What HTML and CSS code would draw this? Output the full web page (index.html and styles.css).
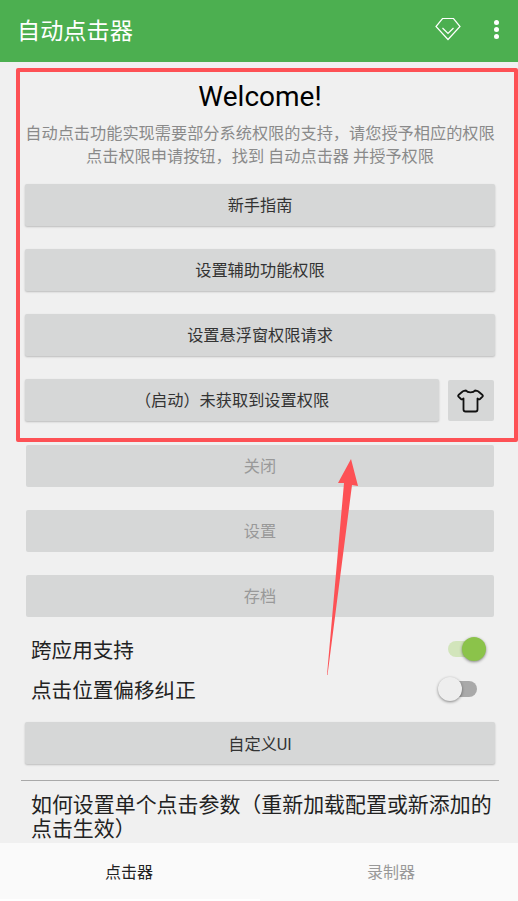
FILE: index.html
```html
<!DOCTYPE html>
<html lang="zh">
<head>
<meta charset="utf-8">
<title>自动点击器</title>
<link rel="stylesheet" href="styles.css">
</head>
<body>
<div class="app">
  <header class="bar">
    <h1 class="bar-title">自动点击器</h1>
    <svg class="gem" width="26" height="24" viewBox="0 0 26 24" fill="none" stroke="#fff" stroke-width="1.2"><path d="M7.5 1.5H18.5L25 9.5 13 22.5 1 9.5Z"/><path d="M7.5 11 13 16.500 18.500 11"/></svg>
    <div class="more"><i></i><i></i><i></i></div>
  </header>
  <main class="content">
    <h2 class="welcome">Welcome!</h2>
    <p class="intro">自动点击功能实现需要部分系统权限的支持，请您授予相应的权限<br>点击权限申请按钮，找到 自动点击器 并授予权限</p>
    <div class="btn raised">新手指南</div>
    <div class="btn raised">设置辅助功能权限</div>
    <div class="btn raised">设置悬浮窗权限请求</div>
    <div class="btn-row">
      <div class="btn raised grow">（启动）未获取到设置权限</div>
      <div class="shirt">
        <svg width="28" height="26" viewBox="0 0 28 26" fill="none" stroke="#111" stroke-width="1.8" stroke-linejoin="round"><path d="M9 2.500C10.500 5 16.500 5 18 2.500L20 2.800Q21 3 22 4L25.500 7Q26.200 7.800 25.500 8.600L23 11Q22 11.800 20.500 10.500V21.500Q20.500 23.500 18.500 23.500H8.500Q6.500 23.500 6.500 21.500V10.500Q5 11.800 4 11L1.500 8.600Q.8 7.800 1.500 7L5 4Q6 3 7 2.800Z"/></svg>
      </div>
    </div>
    <div class="btn off">关闭</div>
    <div class="btn off">设置</div>
    <div class="btn off">存档</div>
    <div class="opt first"><span>跨应用支持</span><span class="sw on"><b></b></span></div>
    <div class="opt"><span>点击位置偏移纠正</span><span class="sw"><b></b></span></div>
    <div class="btn raised custom">自定义UI</div>
    <hr class="rule">
    <p class="how">如何设置单个点击参数（重新加载配置或新添加的点击生效）</p>
  </main>
  <nav class="tabs">
    <div class="tab active">点击器</div>
    <div class="tab second">录制器</div>
  </nav>
  <div class="mark"></div>
  <svg class="arrow" width="40" height="222" viewBox="0 0 40 222"><path d="M25 0 32 27 26 26 1.500 216 1 216 18 24 12 24Z" fill="#fd5155"/></svg>
</div>
</body>
</html>
```
FILE: styles.css
```css
* { box-sizing: border-box; }
html, body { margin: 0; padding: 0; }
body {
  width: 518px; height: 901px; overflow: hidden;
  background: #f0f0f0;
  font-family: Roboto, "Noto Sans CJK SC", sans-serif;
  color: #222;
}
.app { position: relative; width: 518px; height: 901px; overflow: hidden; display: flex; flex-direction: column; }
.bar {
  height: 62px; flex: none; background: #4caf50; color: #fff;
  display: flex; align-items: center; padding: 0 18px 0 17px;
}
.bar-title { margin: 0; flex: 1; font-size: 23.2px; line-height: 62px; font-weight: 400; }
.gem { margin-right: 33.5px; margin-top: -4px; }
.more { display: flex; flex-direction: column; gap: 2px; margin-right: 1px; margin-top: -3px; }
.more i { width: 5px; height: 5px; border-radius: 50%; background: #fff; display: block; }
.content { flex: 1; overflow: hidden; padding: 0 23px 0 25px; }
.welcome { margin: 16px 0 0; text-align: center; font-size: 28px; line-height: 38px; font-weight: 400; color: #000; }
.intro { margin: 6px -4px 0; text-align: center; font-size: 16.2px; line-height: 23px; color: #8a8a8a; white-space: nowrap; }
.btn {
  height: 42px; background: #d6d7d7; border-radius: 2px; padding-bottom: 2px;
  display: flex; align-items: center; justify-content: center;
  font-size: 16.2px; color: #333;
}
.raised { box-shadow: 0 1px 2px rgba(0,0,0,.22); margin-bottom: 23px; }
.intro + .btn { margin-top: 16px; }
.btn-row { display: flex; gap: 9px; align-items: flex-start; margin-bottom: 24px; }
.btn-row .raised { margin: 0; }
.grow { flex: 1; }
.shirt { width: 46px; height: 41px; margin-top: 1px; background: #d6d7d7; border-radius: 2px; display: flex; align-items: center; justify-content: center; margin-right: 1px; }
.off { margin: 0 1px 23px; color: #999; }
.opt { display: flex; align-items: center; justify-content: space-between; height: 40px; padding: 0 18px 0 6px; font-size: 20.6px; color: #222; }
.opt.first { margin-top: -11px; }
.sw { position: relative; display: block; width: 30px; height: 16px; background: #a9a9a9; border-radius: 8px; }
.sw b { position: absolute; left: -9px; top: -4px; width: 24px; height: 24px; border-radius: 50%; background: #eee; box-shadow: 0 1px 3px rgba(0,0,0,.45); }
.sw.on { background: #d2e5bb; margin-right: -1px; }
.sw.on b { left: 14px; background: #8bc34a; }
.custom { margin: 13px 0 0; padding-bottom: 0; }
.rule { margin: 16px -4px 0 -4px; border: 0; border-top: 1px solid #a9a9a9; }
.how { margin: 12px 0 0 6px; width: 464px; font-size: 20.95px; line-height: 24px; color: #222; }
.tabs { position: absolute; left: 0; right: 0; bottom: 0; height: 58px; background: #fafafa; display: flex; }
.tab { display: flex; align-items: center; justify-content: center; font-size: 16px; color: #999; padding-bottom: 2px; }
.tab.active { width: 260px; padding-right: 2px; color: #222; box-shadow: inset 0 -2px #fff; }
.tab.second { flex: 1; padding-left: 4px; }
.mark { position: absolute; left: 16px; top: 68px; width: 502px; height: 374px; border: 4px solid #fd5155; border-radius: 2px; }
.arrow { position: absolute; left: 326px; top: 459px; }
```
